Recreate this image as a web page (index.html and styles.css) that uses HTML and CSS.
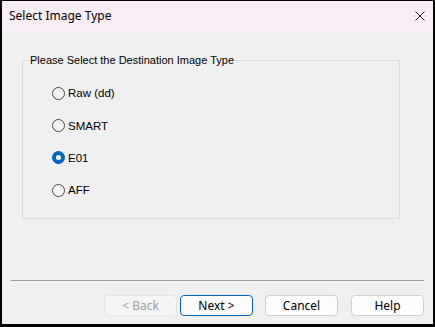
FILE: index.html
```html
<!DOCTYPE html>
<html>

<head>
    <title>Select Image Type</title>
    <link rel="stylesheet" href="styles.css">
</head>

<body>

    <div class="window">
        <div class="titlebar">
            <span class="title">Select Image Type</span>
            <button class="close" type="button" aria-label="Close">
                <svg width="10" height="10" viewBox="0 0 10 10">
                    <path d="M0.5 0.5 L9.5 9.5 M9.5 0.5 L0.5 9.5" stroke="#1a1a1a" stroke-width="1" fill="none" />
                </svg>
            </button>
        </div>
        <div class="content">
            <fieldset class="group">
                <legend>Please Select the Destination Image Type</legend>
                <label class="option"><input type="radio" name="imageType" value="raw"><span>Raw (dd)</span></label>
                <label class="option"><input type="radio" name="imageType" value="smart"><span>SMART</span></label>
                <label class="option"><input type="radio" name="imageType" value="e01" checked><span>E01</span></label>
                <label class="option"><input type="radio" name="imageType" value="aff"><span>AFF</span></label>
            </fieldset>
            <div class="footer">
                <div class="separator"></div>
                <div class="buttons">
                    <button type="button" class="btn" disabled>&lt; Back</button>
                    <button type="button" class="btn default">Next &gt;</button>
                    <button type="button" class="btn cancel">Cancel</button>
                    <button type="button" class="btn help">Help</button>
                </div>
            </div>
        </div>
    </div>

</body>

</html>
```

FILE: styles.css
```css
html,
body {
    margin: 0;
    padding: 0;
    height: 100%;
}

body {
    background: #000;
    font-family: "Liberation Sans", Arial, sans-serif;
}

.window {
    box-sizing: border-box;
    margin: 0 2px;
    padding-top: 1px;
    height: 324px;
    display: flex;
    flex-direction: column;
}

.titlebar {
    height: 30px;
    background: #f9edf6;
    display: flex;
    align-items: center;
    justify-content: space-between;
    padding-left: 7px;
}

.title {
    font-family: "Noto Sans", sans-serif;
    font-size: 12px;
    color: #000;
    margin-top: -1px;
}

.close {
    border: none;
    background: transparent;
    width: 27px;
    height: 30px;
    padding: 0;
    display: flex;
    align-items: center;
    justify-content: center;
}

.content {
    flex: 1;
    background: #f0f0f0;
    display: flex;
    flex-direction: column;
}

.group {
    box-sizing: border-box;
    margin: 23px 0 0 20px;
    width: 378px;
    height: 165px;
    border: 1px solid #dcdcdc;
    padding: 11px 0 0 29px;
}

.group legend {
    font-size: 11px;
    color: #000;
    padding: 0 1px;
    margin-left: -23px;
}

.option {
    display: flex;
    align-items: center;
    height: 32.4px;
    font-size: 11.5px;
    color: #000;
}

.option input {
    appearance: none;
    -webkit-appearance: none;
    box-sizing: border-box;
    width: 13px;
    height: 13px;
    margin: 0 3px 0 0;
    border: 1px solid #4a4a4a;
    border-radius: 50%;
    background: #f4f4f4;
}

.option input:checked {
    border: 4px solid #0067c0;
    background: #fff;
}

.footer {
    margin-top: auto;
    padding: 0 9px 8px 9px;
}

.separator {
    height: 1px;
    background: #a0a0a0;
    margin-bottom: 14px;
}

.buttons {
    display: flex;
    justify-content: flex-end;
}

.btn {
    box-sizing: border-box;
    width: 73px;
    height: 21px;
    margin-left: 3px;
    font-family: "Noto Sans", sans-serif;
    font-size: 12px;
    color: #000;
    background: #fdfdfd;
    border: 1px solid #d0d0d0;
    border-radius: 4px;
    padding: 0;
}

.btn.cancel {
    margin-left: 12px;
}

.btn.help {
    margin-left: 13px;
}

.btn.default {
    border-color: #0067c0;
}

.btn:disabled {
    background: #f5f5f5;
    border-color: #e5e5e5;
    color: #a0a0a0;
}
```
